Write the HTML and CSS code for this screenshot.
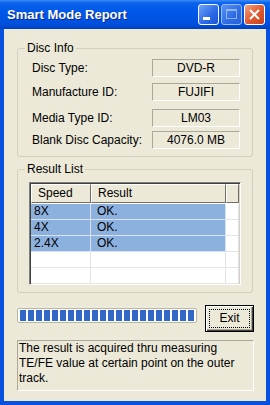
FILE: index.html
```html
<!DOCTYPE html>
<html lang="en">
<head>
    <meta charset="UTF-8">
    <meta name="viewport" content="width=device-width, initial-scale=1.0">
    <title>Smart Mode Report</title>
    <link rel="stylesheet" href="styles.css">
</head>
<body>
    <div class="window">
        <div class="titlebar">
            <span class="title">Smart Mode Report</span>
            <div class="caption-buttons">
                <button class="cap min">
                    <svg width="19" height="19" viewBox="0 0 19 19"><rect x="4" y="12" width="7" height="3" fill="#fff"/></svg>
                </button>
                <button class="cap max">
                    <svg width="19" height="19" viewBox="0 0 19 19"><rect x="4.5" y="4.5" width="10" height="9" fill="none" stroke="#fff"/><rect x="4" y="4" width="11" height="2" fill="#fff"/></svg>
                </button>
                <button class="cap close">
                    <svg width="19" height="19" viewBox="0 0 19 19"><path d="M5 5 L14 14 M14 5 L5 14" stroke="#fff" stroke-width="2"/></svg>
                </button>
            </div>
        </div>

        <div class="client">
            <fieldset class="group disc-info">
                <legend>Disc Info</legend>
                <div class="group-body">
                    <div class="info-row"><span class="label">Disc Type:</span><span class="value">DVD-R</span></div>
                    <div class="info-row"><span class="label">Manufacture ID:</span><span class="value">FUJIFI</span></div>
                    <div class="info-row"><span class="label">Media Type ID:</span><span class="value">LM03</span></div>
                    <div class="info-row"><span class="label">Blank Disc Capacity:</span><span class="value">4076.0 MB</span></div>
                </div>
            </fieldset>

            <fieldset class="group result-list">
                <legend>Result List</legend>
                <div class="group-body">
                    <div class="listview">
                        <div class="lv-header">
                            <div class="hcol speed">Speed</div>
                            <div class="hcol result">Result</div>
                            <div class="hcol filler"></div>
                        </div>
                        <div class="lv-row selected">
                            <div class="cell speed">8X</div>
                            <div class="cell result">OK.</div>
                            <div class="cell filler"></div>
                        </div>
                        <div class="lv-row selected">
                            <div class="cell speed">4X</div>
                            <div class="cell result">OK.</div>
                            <div class="cell filler"></div>
                        </div>
                        <div class="lv-row selected">
                            <div class="cell speed">2.4X</div>
                            <div class="cell result">OK.</div>
                            <div class="cell filler"></div>
                        </div>
                        <div class="lv-row">
                            <div class="cell speed"></div>
                            <div class="cell result"></div>
                            <div class="cell filler"></div>
                        </div>
                        <div class="lv-row">
                            <div class="cell speed"></div>
                            <div class="cell result"></div>
                            <div class="cell filler"></div>
                        </div>
                    </div>
                </div>
            </fieldset>

            <div class="action-row">
                <div class="progress"><div class="progress-fill"></div></div>
                <button class="exit-btn"><span>Exit</span></button>
            </div>

            <div class="note">The result is acquired thru measuring TE/FE value at certain point on the outer track.</div>
        </div>
    </div>
</body>
</html>
```

FILE: styles.css
```css
body {
    margin: 0;
    font-family: "Liberation Sans", Arial, sans-serif;
    font-size: 12px;
    color: #000;
}

.window {
    width: 270px;
    height: 405px;
    background-color: #0850de;
    display: flex;
    flex-direction: column;
}

.titlebar {
    height: 29px;
    flex-shrink: 0;
    display: flex;
    align-items: center;
    padding: 0 5px 0 7px;
    background: linear-gradient(#3b8cf5 0, #0a62ec 3px, #0058e8 40%, #004fdc 85%, #003fc0 100%);
}

.title {
    flex: 1;
    color: #fff;
    font-weight: bold;
    font-size: 13px;
    text-shadow: 1px 1px #0c2a8e;
}

.caption-buttons {
    display: flex;
    gap: 2px;
}

.cap {
    width: 21px;
    height: 21px;
    padding: 0;
    border: 1px solid #fff;
    border-radius: 3px;
    display: flex;
    align-items: center;
    justify-content: center;
    background: linear-gradient(135deg, #6aa4fb, #2a68e6 60%, #1d54d4);
}

.cap.max {
    border-color: #9bb8f0;
    background: linear-gradient(135deg, #5a93f2, #2d6be4 60%, #2a62d8);
}

.cap.max svg {
    opacity: 0.45;
}

.cap.close {
    background: linear-gradient(135deg, #f0a080, #e0582e 55%, #c8401c);
}

.client {
    flex: 1;
    margin: 0 4px 4px;
    padding: 12px 0 0 13px;
    background-color: #ece9d8;
}

.group {
    width: 236px;
    box-sizing: border-box;
    margin: 0;
    padding: 0;
    border: 1px solid #d0d0bf;
    border-radius: 3px;
}

.group legend {
    margin-left: 7px;
    padding: 0 2px;
    line-height: 14px;
}

.disc-info .group-body {
    padding: 4px 12px 7px 14px;
    display: flex;
    flex-direction: column;
    gap: 6px;
}

.info-row {
    display: flex;
    height: 18px;
    align-items: center;
}

.info-row:nth-child(3) {
    margin-top: 2px;
    margin-bottom: -2px;
}

.label {
    width: 120px;
}

.value {
    width: 88px;
    height: 18px;
    box-sizing: border-box;
    border: 1px solid;
    border-color: #aca899 #fff #fff #aca899;
    text-align: center;
    line-height: 16px;
}

.result-list {
    margin-top: 5px;
}

.result-list .group-body {
    padding: 6px 0 7px 11px;
}

.listview {
    width: 212px;
    height: 103px;
    box-sizing: border-box;
    border: 1px solid;
    border-color: #808080 #fff #fff #808080;
    box-shadow: inset 1px 1px #404040, inset -1px -1px #d4d0c8;
    padding: 1px;
    background-color: #fff;
    overflow: hidden;
}

.lv-header {
    display: flex;
    height: 19px;
    margin-bottom: 1px;
}

.hcol {
    box-sizing: border-box;
    height: 19px;
    line-height: 17px;
    padding-left: 6px;
    background-color: #ece9d8;
    border: 1px solid;
    border-color: #fff #716f64 #716f64 #fff;
}

.speed {
    width: 60px;
    flex-shrink: 0;
    box-sizing: border-box;
}

.result {
    width: 135px;
    flex-shrink: 0;
    box-sizing: border-box;
}

.filler {
    flex: 1;
}

.lv-row {
    display: flex;
    height: 16px;
}

.cell {
    height: 16px;
    box-sizing: border-box;
    line-height: 15px;
    border-right: 1px solid #e4e4e4;
    border-bottom: 1px solid #e4e4e4;
}

.cell.speed {
    padding-left: 3px;
}

.cell.result {
    padding-left: 6px;
}

.lv-row.selected .speed,
.lv-row.selected .result {
    background-color: #8db1df;
    border-color: #d6e2f2;
}

.action-row {
    display: flex;
    align-items: flex-start;
    margin-top: 12px;
}

.progress {
    width: 180px;
    height: 15px;
    margin-top: 3px;
    box-sizing: border-box;
    padding: 1px 2px;
    border: 1px solid #b8b6a8;
    border-radius: 2px;
    background-color: #fff;
}

.progress-fill {
    height: 100%;
    background: repeating-linear-gradient(90deg, #3168c8 0, #3168c8 6px, transparent 6px, transparent 8px);
}

.exit-btn {
    width: 49px;
    height: 27px;
    margin-left: 8px;
    padding: 3px;
    border: 1px solid #000;
    background-color: #ece9d8;
    box-shadow: inset 1px 1px #fff, inset -1px -1px #404040, inset -2px -2px #aca899;
    font-family: "Liberation Sans", Arial, sans-serif;
    font-size: 12px;
    color: #000;
}

.exit-btn span {
    display: block;
    height: 100%;
    box-sizing: border-box;
    border: 1px dotted #000;
    line-height: 17px;
}

.note {
    width: 237px;
    height: 51px;
    box-sizing: border-box;
    margin-top: 8px;
    padding: 0 1px;
    border: 1px solid;
    border-color: #aca899 #fff #fff #aca899;
    line-height: 15px;
}
```
